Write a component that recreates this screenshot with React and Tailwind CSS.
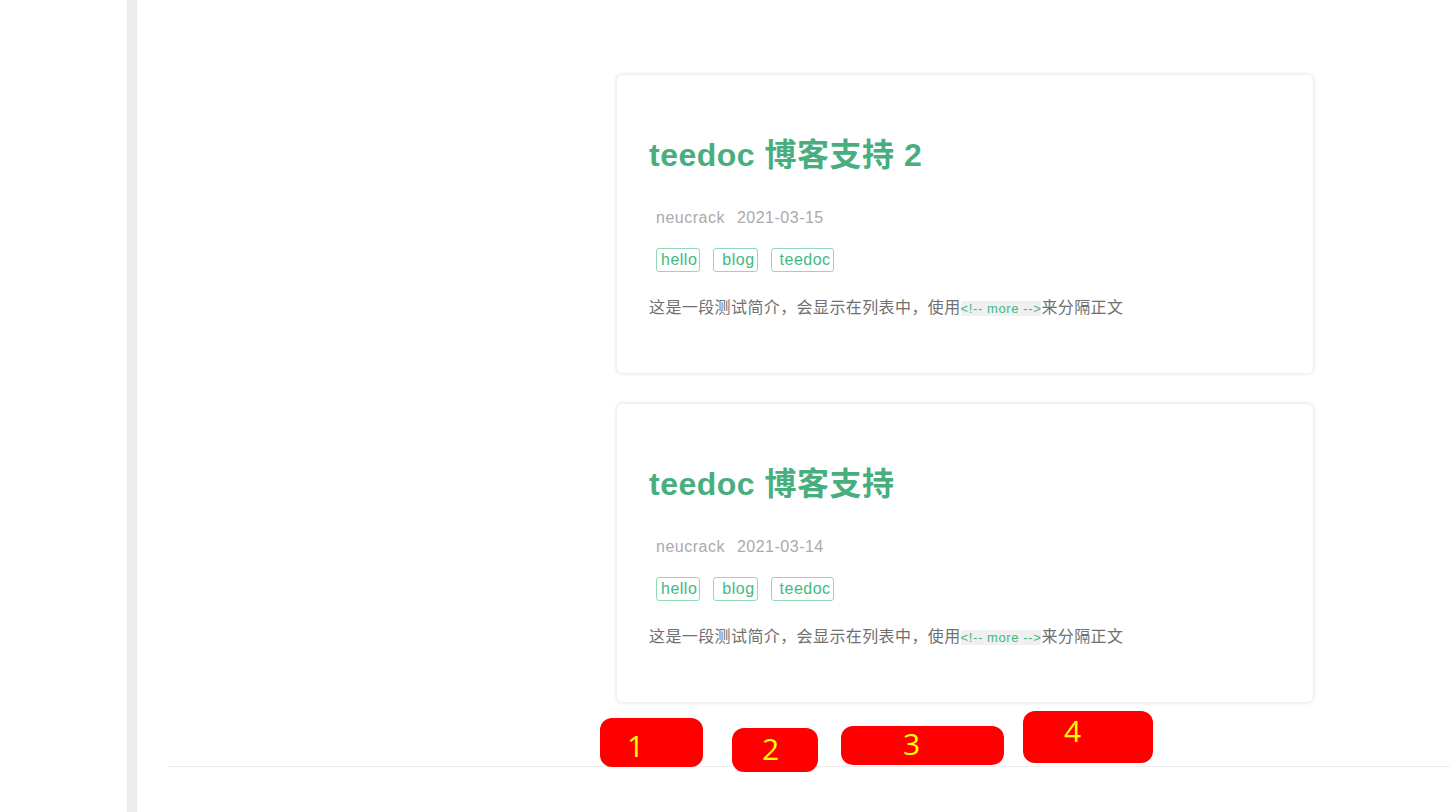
import React from 'react'

// ── Blog list page ────────────────────────────────────────────────────────────

const posts = [
  { title: 'teedoc 博客支持 2', author: 'neucrack', date: '2021-03-15' },
  { title: 'teedoc 博客支持',   author: 'neucrack', date: '2021-03-14' },
]

const tags = [
  { label: 'hello',  pad: 'pl-[4px]' },
  { label: 'blog',   pad: 'pl-[8px]' },
  { label: 'teedoc', pad: 'pl-[8px]' },
]

function PostCard({ post }) {
  return (
    <div className="w-[696px] bg-white rounded-[5px] shadow-[0_0_4px_rgba(0,0,0,0.16)] px-8 pt-[56px] pb-[53px]">
      <h2 className="text-[32px] leading-[48px] font-bold text-[#48ae7e]">
        {post.title}
      </h2>
      <div className="mt-[27px] pl-[7px] flex gap-[12px] text-[16px] leading-6 text-[#aaaaaa]">
        <span>{post.author}</span>
        <span>{post.date}</span>
      </div>
      <div className="mt-[18px] pl-[7px] flex gap-[13px]">
        {tags.map(t => (
          <span
            key={t.label}
            className={`${t.pad} pr-[2px] border border-[#92d9b6] rounded-[3px] text-[16px] leading-[22px] text-[#42b983]`}
          >
            {t.label}
          </span>
        ))}
      </div>
      <p className="mt-[24px] text-[16px] leading-6 tracking-[0.4px] text-[#707070]">
        这是一段测试简介，会显示在列表中，使用
        <code className="bg-[#f0f0f0] text-[#42b983] text-[13px] leading-[15px] tracking-[0.6px] font-['Liberation_Sans',sans-serif]">
          {'<!-- more -->'}
        </code>
        来分隔正文
      </p>
    </div>
  )
}

export default function App() {
  return (
    <div className="h-[812px] w-[1450px] overflow-hidden flex bg-white tracking-[0.5px] font-['Liberation_Sans','Noto_Sans_CJK_SC',sans-serif]">
      {/* left gutter + grey rail */}
      <div className="w-[127px] shrink-0" />
      <div className="w-[10px] shrink-0 bg-[#ececec]" />

      <main className="relative flex-1 flex flex-col">
        <div className="pt-[75px] pl-[480px] flex flex-col gap-[31px]">
          {posts.map(p => <PostCard key={p.title} post={p} />)}
        </div>

        {/* footer rule */}
        <div className="mt-[64px] ml-[31px] border-t border-[#eeeeee]" />

        {/* pager blocks (overlay) */}
        <div className="absolute left-[463px] top-[711px] tracking-normal font-['Open_Sans',sans-serif] text-[30px] text-[#ffff00]">
          <span className="absolute left-0 top-[7px] w-[103px] h-[49px] rounded-[12px] bg-[#ff0000] pl-[27px] pt-[8px] leading-[40px]">1</span>
          <span className="absolute left-[132px] top-[17px] w-[86px] h-[44px] rounded-[12px] bg-[#ff0000] pl-[30px] pt-[1px] leading-[40px]">2</span>
          <span className="absolute left-[241px] top-[15px] w-[163px] h-[39px] rounded-[12px] bg-[#ff0000] pl-[62px] leading-[36px]">3</span>
          <span className="absolute left-[423px] top-0 w-[130px] h-[52px] rounded-[12px] bg-[#ff0000] pl-[41px] leading-[40px]">4</span>
        </div>
      </main>
    </div>
  )
}
